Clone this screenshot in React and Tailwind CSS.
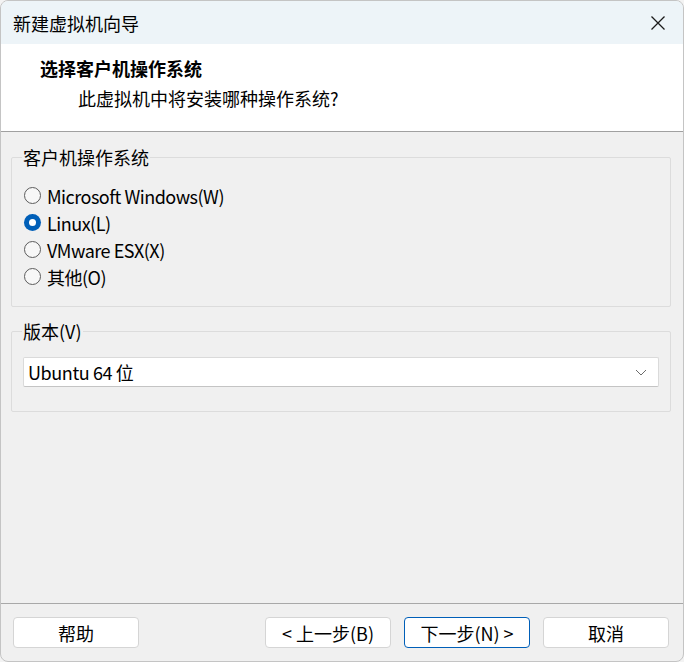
import { useState } from 'react'

const font = { fontFamily: '"Noto Sans CJK SC", "Noto Sans", sans-serif' }

function Radio({ checked, label, onClick }) {
  return (
    <div className="flex items-center h-[27px] gap-[6px] cursor-default" onClick={onClick}>
      {checked ? (
        <span className="w-[17px] h-[17px] rounded-full bg-[#005fb8] flex items-center justify-center">
          <span className="w-[7px] h-[7px] rounded-full bg-white" />
        </span>
      ) : (
        <span className="w-[17px] h-[17px] rounded-full border border-[#5c5c5c] bg-[#f7f7f7]" />
      )}
      <span className="text-[18px] leading-[24px] tracking-[-0.5px] text-black">{label}</span>
    </div>
  )
}

function Button({ children, primary }) {
  return (
    <button
      className={
        'w-[126px] h-[31px] rounded-[4px] bg-white text-[18px] leading-[24px] text-black flex items-center justify-center border ' +
        (primary ? 'border-[#005fb8]' : 'border-[#d5d5d5]')
      }
    >
      {children}
    </button>
  )
}

export default function App() {
  const [os, setOs] = useState('linux')

  const options = [
    { id: 'win', label: 'Microsoft Windows(W)' },
    { id: 'linux', label: 'Linux(L)' },
    { id: 'esx', label: 'VMware ESX(X)' },
    { id: 'other', label: '其他(O)' },
  ]

  return (
    <div className="w-[684px] h-[662px] bg-[#f3f3f3]" style={font}>
      <div className="w-full h-full flex flex-col rounded-[8px] border border-[#c4c4c4] overflow-hidden bg-[#f0f0f0]">
        {/* Title bar */}
        <div className="h-[43px] flex items-center justify-between bg-[#edf4f8] pl-[12px] pr-[17px] shrink-0">
          <span className="text-[18px] leading-[24px] text-black">新建虚拟机向导</span>
          <svg width="16" height="16" viewBox="0 0 16 16" fill="none" stroke="#1a1a1a" strokeWidth="1.3">
            <path d="M1.5 1.5 L14.5 14.5 M14.5 1.5 L1.5 14.5" />
          </svg>
        </div>

        {/* Header */}
        <div className="h-[88px] bg-white border-b border-[#a0a0a0] pt-[12px] shrink-0">
          <div className="pl-[39px] text-[18px] leading-[24px] font-bold text-black">选择客户机操作系统</div>
          <div className="pl-[77px] mt-[6px] text-[18px] leading-[24px] text-black">此虚拟机中将安装哪种操作系统?</div>
        </div>

        {/* Body */}
        <div className="flex-1 pl-[10px] pr-[12px]">
          <fieldset className="mt-[13px] border border-[#dcdcdc] rounded-[2px] px-[12px] pt-[13px] pb-[16px]">
            <legend className="ml-[-2px] px-[1px] text-[18px] leading-[24px] text-black">客户机操作系统</legend>
            {options.map((o) => (
              <Radio key={o.id} label={o.label} checked={os === o.id} onClick={() => setOs(o.id)} />
            ))}
          </fieldset>

          <fieldset className="mt-[12px] border border-[#dcdcdc] rounded-[2px] px-[11px] pt-[14px] pb-[24px]">
            <legend className="ml-[-1px] px-[1px] text-[18px] leading-[24px] text-black">版本(V)</legend>
            <div className="h-[30px] bg-white border border-[#dadada] border-b-[#c4c4c4] rounded-[2px] flex items-center justify-between pl-[4px] pr-[11px]">
              <span className="text-[18px] leading-[24px] tracking-[-0.4px] text-black">Ubuntu 64 位</span>
              <svg width="12" height="7" viewBox="0 0 12 7" fill="none" stroke="#6b6b6b" strokeWidth="1">
                <path d="M1 1 L6 6 L11 1" />
              </svg>
            </div>
          </fieldset>
        </div>

        {/* Footer */}
        <div className="h-[58px] border-t border-[#a8a8a8] flex items-start pt-[13px] pl-[12px] pr-[14px] shrink-0">
          <Button>帮助</Button>
          <div className="flex-1" />
          <div className="flex gap-[13px]">
            <Button>&lt; 上一步(B)</Button>
            <Button primary>下一步(N) &gt;</Button>
            <Button>取消</Button>
          </div>
        </div>
      </div>
    </div>
  )
}
